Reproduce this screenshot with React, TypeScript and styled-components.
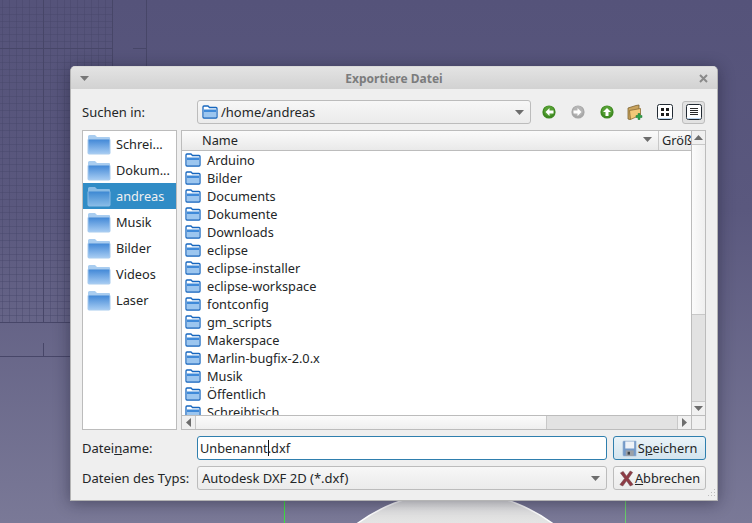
import React, { FC } from 'react';
import styled, { createGlobalStyle } from 'styled-components';

const GlobalStyle = createGlobalStyle`
  html, body {
    margin: 0;
    padding: 0;
    width: 752px;
    height: 523px;
    overflow: hidden;
    background: #55537a;
  }
  * { box-sizing: border-box; }
`;

const Desktop = styled.div`
  position: relative;
  width: 752px;
  height: 523px;
  overflow: hidden;
  background: linear-gradient(180deg, #55537a 0%, #5a587e 40%, #7a7997 100%);
  font-family: 'Noto Sans', 'Open Sans', sans-serif;
  font-size: 12px;
  color: #232627;
`;

const Backdrop = styled.svg`
  position: absolute;
  inset: 0;
`;

const Dialog = styled.div`
  position: absolute;
  left: 70px;
  top: 66px;
  width: 648px;
  height: 435px;
  display: flex;
  flex-direction: column;
  background: #efefef;
  border: 1px solid #b4b4b4;
  border-top-color: #d8d8d8;
  border-radius: 5px 5px 0 0;
  box-shadow: 0 2px 16px rgba(20, 20, 40, 0.45);
`;

const TitleBar = styled.div`
  height: 22px;
  flex: none;
  display: flex;
  align-items: center;
  justify-content: space-between;
  padding: 0 9px 0 9px;
  background: linear-gradient(180deg, #e3e3e3, #d2d2d2);
  border-radius: 4px 4px 0 0;
`;

const WindowTitle = styled.div`
  font-size: 12px;
  font-weight: 700;
  color: #7b7c7d;
`;

const Body = styled.div`
  flex: 1;
  display: flex;
  flex-direction: column;
  padding: 11px 11px 0 11px;
`;

const Row = styled.div`
  display: flex;
  align-items: center;
  height: 24px;
  flex: none;
`;

const FieldLabel = styled.div`
  width: 115px;
  flex: none;
  font-size: 13px;
  white-space: nowrap;
`;

const ComboBox = styled.div<{ $width: number }>`
  width: ${({ $width }) => $width}px;
  height: 24px;
  flex: none;
  display: flex;
  align-items: center;
  justify-content: space-between;
  gap: 4px;
  padding: 0 6px 0 4px;
  border: 1px solid #bcbcbc;
  border-radius: 3px;
  background: linear-gradient(180deg, #f7f7f7, #ebebeb);
  font-size: 13px;
`;

const ComboValue = styled.div`
  flex: 1;
  display: flex;
  align-items: center;
  gap: 3px;
`;

const Toolbar = styled.div`
  display: flex;
  align-items: center;
  margin-left: 6px;
`;

const ToolButton = styled.div<{ $checked?: boolean }>`
  width: 23px;
  height: 23px;
  margin-right: 6px;
  display: flex;
  align-items: center;
  justify-content: center;
  border-radius: 3px;
  border: 1px solid ${({ $checked }) => ($checked ? '#bdbdbd' : 'transparent')};
  background: ${({ $checked }) => ($checked ? '#e2e2e2' : 'transparent')};
`;

const Panes = styled.div`
  height: 300px;
  flex: none;
  display: flex;
  gap: 4px;
  margin-top: 6px;
  margin-bottom: 6px;
`;

const Sidebar = styled.div`
  width: 95px;
  flex: none;
  border: 1px solid #bcbcbc;
  background: #fff;
  padding-top: 0;
`;

const Place = styled.div<{ $selected?: boolean }>`
  height: 26px;
  display: flex;
  align-items: center;
  gap: 5px;
  padding-left: 4px;
  font-size: 12.75px;
  background: ${({ $selected }) => ($selected ? '#308cc6' : 'transparent')};
  color: ${({ $selected }) => ($selected ? '#eff0f1' : '#232627')};
`;

const ListFrame = styled.div`
  width: 525px;
  flex: none;
  display: grid;
  grid-template-columns: 509px 14px;
  grid-template-rows: 284px 14px;
  border: 1px solid #bcbcbc;
  background: #fff;
`;

const Table = styled.div`
  display: flex;
  flex-direction: column;
  overflow: hidden;
`;

const HeaderRow = styled.div`
  height: 20px;
  flex: none;
  display: flex;
  background: linear-gradient(180deg, #fbfbfb, #e9e9e9);
  border-bottom: 1px solid #bcbcbc;
`;

const NameHeader = styled.div`
  width: 477px;
  flex: none;
  display: flex;
  align-items: center;
  justify-content: space-between;
  padding: 0 6px 2px 20px;
  border-right: 1px solid #c8c8c8;
  font-size: 12.75px;
`;

const SizeHeader = styled.div`
  flex: 1;
  overflow: hidden;
  padding-left: 3px;
  line-height: 18px;
  font-size: 12.75px;
  white-space: nowrap;
`;

const Files = styled.div`
  flex: 1;
  overflow: hidden;
`;

const FileRow = styled.div`
  height: 18px;
  display: flex;
  align-items: center;
  gap: 6px;
  padding-left: 3px;
  font-size: 12.75px;
`;

const VScroll = styled.div`
  grid-row: 1;
  grid-column: 2;
  display: flex;
  flex-direction: column;
  border-left: 1px solid #bcbcbc;
`;

const HScroll = styled.div`
  grid-row: 2;
  grid-column: 1;
  display: flex;
  border-top: 1px solid #bcbcbc;
`;

const Corner = styled.div`
  grid-row: 2;
  grid-column: 2;
  background: #efefef;
  border-top: 1px solid #bcbcbc;
  border-left: 1px solid #bcbcbc;
`;

const ArrowButton = styled.div<{ $horizontal?: boolean }>`
  flex: none;
  ${({ $horizontal }) => ($horizontal ? 'width: 14px;' : 'height: 14px;')}
  display: flex;
  align-items: center;
  justify-content: center;
  background: #f0f0f0;
  ${({ $horizontal }) =>
    $horizontal ? 'border-right: 1px solid #c8c8c8;' : 'border-bottom: 1px solid #c8c8c8;'}
`;

const EndButton = styled(ArrowButton)`
  ${({ $horizontal }) =>
    $horizontal
      ? 'border-right: 0; border-left: 1px solid #c8c8c8;'
      : 'border-bottom: 0; border-top: 1px solid #c8c8c8;'}
`;

const Handle = styled.div<{ $horizontal?: boolean }>`
  flex: 1;
  background: linear-gradient(
    ${({ $horizontal }) => ($horizontal ? '180deg' : '90deg')},
    #fbfbfb,
    #efefef
  );
`;

const Track = styled.div<{ $horizontal?: boolean; $size: number }>`
  flex: none;
  ${({ $horizontal, $size }) => ($horizontal ? `width: ${$size}px;` : `height: ${$size}px;`)}
  background: #e2e2e2;
  ${({ $horizontal }) =>
    $horizontal ? 'border-left: 1px solid #c8c8c8;' : 'border-top: 1px solid #c8c8c8;'}
`;

const TextField = styled.div`
  width: 410px;
  height: 24px;
  flex: none;
  display: flex;
  align-items: center;
  padding-left: 2px;
  border: 1px solid #2f7fae;
  border-radius: 3px;
  background: #fff;
  font-size: 12.75px;
`;

const Caret = styled.span`
  display: inline-block;
  width: 1px;
  height: 16px;
  margin-right: -1px;
  background: #111;
`;

const ActionButton = styled.div<{ $focused?: boolean }>`
  width: 93px;
  height: 24px;
  flex: none;
  margin-left: 6px;
  display: flex;
  align-items: center;
  justify-content: center;
  gap: 1px;
  border: 1px solid ${({ $focused }) => ($focused ? '#2f7fae' : '#bcbcbc')};
  border-radius: 3px;
  background: ${({ $focused }) =>
    $focused ? 'linear-gradient(180deg, #eaf3f8, #d3e4ee)' : 'linear-gradient(180deg, #f7f7f7, #ebebeb)'};
  font-size: 12.75px;
`;

const RowGap = styled.div`
  height: 6px;
  flex: none;
`;

const SizeGrip = styled.svg`
  position: absolute;
  right: 1px;
  bottom: 1px;
`;

const FolderIcon: FC<{ size?: number; faded?: boolean }> = ({ size = 16, faded }) =>
  size > 16 ? (
    <svg width="24" height="22" viewBox="0 0 24 22" style={{ flex: 'none', opacity: faded ? 0.75 : 1 }}>
      <path d="M1 3.5 Q1 2 2.5 2 H8 L10 4 H22 Q23 4 23 5 V20 Q23 21 22 21 H2 Q1 21 1 20 Z" fill="#a9cdf0" />
      <rect x="1" y="6" width="22" height="15" rx="1" fill="url(#bigFolder)" stroke="#a8cbee" strokeWidth="1" />
      <defs>
        <linearGradient id="bigFolder" x1="0" y1="0" x2="0" y2="1">
          <stop offset="0" stopColor="#3f86d6" />
          <stop offset="1" stopColor="#a8cdf3" />
        </linearGradient>
      </defs>
    </svg>
  ) : (
    <svg width="16" height="14" viewBox="0 0 16 14" style={{ flex: 'none' }}>
      <path d="M1 2 Q1 1 2 1 H6 L7.5 2.5 H14 Q15 2.5 15 3.5 V12 Q15 13 14 13 H2 Q1 13 1 12 Z" fill="#fff" stroke="#1767bf" strokeWidth="1.3" />
      <rect x="2" y="4.5" width="12" height="3" fill="#3f8ad9" />
      <rect x="2" y="7.5" width="12" height="4.6" fill="#9cc6ef" />
    </svg>
  );

const Triangle: FC<{ dir: 'up' | 'down' | 'left' | 'right'; color?: string; size?: number }> = ({
  dir,
  color = '#6d6d6d',
  size = 9,
}) => {
  const points = {
    up: '0,5 9,5 4.5,0',
    down: '0,0 9,0 4.5,5',
    left: '5,0 5,9 0,4.5',
    right: '0,0 0,9 5,4.5',
  }[dir];
  const vertical = dir === 'up' || dir === 'down';
  return (
    <svg
      width={vertical ? size : (size * 5) / 9}
      height={vertical ? (size * 5) / 9 : size}
      viewBox={vertical ? '0 0 9 5' : '0 0 5 9'}
      style={{ flex: 'none' }}
    >
      <polygon points={points} fill={color} />
    </svg>
  );
};

const NavIcon: FC<{ dir: 'left' | 'right' | 'up'; disabled?: boolean }> = ({ dir, disabled }) => {
  const arrow = {
    left: 'M3.5 7 L7.5 3 V5.5 H11.5 V8.5 H7.5 V11 Z',
    right: 'M10.5 7 L6.5 3 V5.5 H2.5 V8.5 H6.5 V11 Z',
    up: 'M7 3 L11 7 H8.5 V11 H5.5 V7 H3 Z',
  }[dir];
  return (
    <svg width="14" height="14" viewBox="0 0 14 14">
      <circle cx="7" cy="7" r="6.6" fill={disabled ? '#a8a8a8' : '#3f8a22'} />
      <circle cx="7" cy="6" r="5" fill={disabled ? '#bababa' : '#5fa83c'} opacity="0.7" />
      <path d={arrow} fill="#fff" />
    </svg>
  );
};

const NewFolderIcon: FC = () => (
  <svg width="17" height="17" viewBox="0 0 17 17">
    <path d="M1 4 L9 1.5 L12 1 V9 L3 15.5 L1 15 Z" fill="#c9a35e" stroke="#7c6230" strokeWidth="0.8" />
    <path d="M2.5 6.5 L13.5 4.5 V11 L3.5 15.5 Z" fill="#f3c878" stroke="#8a6c34" strokeWidth="0.8" />
    <path d="M11 9.5 H13 V11.5 H15 V13.5 H13 V15.5 H11 V13.5 H9 V11.5 H11 Z" fill="#2fa24a" stroke="#1d7a33" strokeWidth="0.5" />
  </svg>
);

const IconModeIcon: FC = () => (
  <svg width="16" height="16" viewBox="0 0 16 16">
    <rect x="0.5" y="0.5" width="15" height="15" rx="2" fill="#fff" stroke="#222a33" />
    <path d="M1.5 14.5 H14.5" stroke="#bcd6ee" />
    <rect x="4" y="4" width="3" height="3" fill="#1c1c1c" />
    <rect x="9" y="4" width="3" height="3" fill="#1c1c1c" />
    <rect x="4" y="9" width="3" height="3" fill="#1c1c1c" />
    <rect x="9" y="9" width="3" height="3" fill="#1c1c1c" />
  </svg>
);

const DetailModeIcon: FC = () => (
  <svg width="16" height="16" viewBox="0 0 16 16">
    <rect x="0.5" y="0.5" width="15" height="15" rx="2" fill="#fff" stroke="#222a33" />
    <path d="M1.5 14.5 H14.5" stroke="#bcd6ee" />
    <path d="M4 4.5 H12 M4 6.5 H12 M4 8.5 H12 M4 10.5 H12" stroke="#2a2a2a" strokeWidth="1" />
  </svg>
);

const SaveIcon: FC = () => (
  <svg width="15" height="17" viewBox="0 0 16 18" style={{ flex: 'none' }}>
    <path d="M1 2 Q1 1 2 1 H15 V17 H2 Q1 17 1 16 Z" fill="#7399c8" stroke="#9db6d4" strokeWidth="0.6" />
    <rect x="3.5" y="1.5" width="9.5" height="7.5" fill="#eef2f7" />
    <rect x="4" y="11" width="8.5" height="6" fill="#9aa0a7" />
    <rect x="6" y="12.5" width="2.5" height="3" fill="#3b4147" />
  </svg>
);

const CancelIcon: FC = () => (
  <svg width="15" height="17" viewBox="0 0 16 18" style={{ flex: 'none' }}>
    <path
      d="M1.5 3 L4.5 1.5 L8 6.5 L12 1 L14.5 2.5 L10 9 L15 15.5 L12 17 L8 11.5 L4 17 L1 15.5 L6 9 Z"
      fill="#8f3b45"
      stroke="#6b4248"
      strokeWidth="0.6"
    />
  </svg>
);

const places = [
  { name: 'Schrei...' },
  { name: 'Dokum...' },
  { name: 'andreas', selected: true },
  { name: 'Musik' },
  { name: 'Bilder' },
  { name: 'Videos' },
  { name: 'Laser' },
];

const files = [
  'Arduino',
  'Bilder',
  'Documents',
  'Dokumente',
  'Downloads',
  'eclipse',
  'eclipse-installer',
  'eclipse-workspace',
  'fontconfig',
  'gm_scripts',
  'Makerspace',
  'Marlin-bugfix-2.0.x',
  'Musik',
  'Öffentlich',
  'Schreibtisch',
];

const gridLine = '#474668';
const snap = (v: number) => Math.floor(v) + 0.5;

const DesktopDrawing: FC = () => {
  const minorX = Array.from({ length: 16 }, (_, i) => snap(2.4 + i * 6.85));
  const minorY = Array.from({ length: 46 }, (_, i) => snap(7.4 + i * 6.85));
  return (
    <Backdrop width="752" height="523" viewBox="0 0 752 523">
      <defs>
        <linearGradient id="disc" x1="0" y1="0" x2="0" y2="1">
          <stop offset="0" stopColor="#e6e6e6" />
          <stop offset="1" stopColor="#c8c8c8" />
        </linearGradient>
      </defs>
      {minorX.map(x => (
        <line key={x} x1={x} y1="0" x2={x} y2="322" stroke={gridLine} strokeOpacity="0.4" />
      ))}
      {minorY.map(y => (
        <line key={y} x1="0" y1={y} x2="112" y2={y} stroke={gridLine} strokeOpacity="0.4" />
      ))}
      <path
        d="M43.5 0 V322 M112.5 0 V66 M146.5 0 V66 M0 48.5 H112 M133 48.5 H146 M0 322.5 H70 M0 356.5 H70 M43.5 343 V356"
        stroke={gridLine}
        strokeWidth="1"
      />
      <circle cx="455" cy="657" r="165.4" fill="url(#disc)" stroke="#ffffff" strokeWidth="1.5" />
      <path d="M284.5 501 V523" stroke="#3fe03f" strokeWidth="1" />
      <path d="M625.5 501 V523" stroke="#6ad06a" strokeWidth="1" />
    </Backdrop>
  );
};

export default function App() {
  return (
    <Desktop>
      <GlobalStyle />
      <DesktopDrawing />
      <Dialog>
        <TitleBar>
          <Triangle dir="down" color="#777" />
          <WindowTitle>Exportiere Datei</WindowTitle>
          <svg width="9" height="9" viewBox="0 0 9 9">
            <path d="M1 1 L8 8 M8 1 L1 8" stroke="#8a8a8a" strokeWidth="2" />
          </svg>
        </TitleBar>
        <Body>
          <Row>
            <FieldLabel>Suchen in:</FieldLabel>
            <ComboBox $width={334}>
              <ComboValue>
                <FolderIcon />
                /home/andreas
              </ComboValue>
              <Triangle dir="down" />
            </ComboBox>
            <Toolbar>
              <ToolButton>
                <NavIcon dir="left" />
              </ToolButton>
              <ToolButton>
                <NavIcon dir="right" disabled />
              </ToolButton>
              <ToolButton>
                <NavIcon dir="up" />
              </ToolButton>
              <ToolButton>
                <NewFolderIcon />
              </ToolButton>
              <ToolButton>
                <IconModeIcon />
              </ToolButton>
              <ToolButton $checked>
                <DetailModeIcon />
              </ToolButton>
            </Toolbar>
          </Row>
          <Panes>
            <Sidebar>
              {places.map(place => (
                <Place key={place.name} $selected={place.selected}>
                  <FolderIcon size={24} faded={place.selected} />
                  {place.name}
                </Place>
              ))}
            </Sidebar>
            <ListFrame>
              <Table>
                <HeaderRow>
                  <NameHeader>
                    Name
                    <Triangle dir="down" />
                  </NameHeader>
                  <SizeHeader>Größe</SizeHeader>
                </HeaderRow>
                <Files>
                  {files.map(file => (
                    <FileRow key={file}>
                      <FolderIcon />
                      {file}
                    </FileRow>
                  ))}
                </Files>
              </Table>
              <VScroll>
                <ArrowButton>
                  <Triangle dir="up" />
                </ArrowButton>
                <Handle />
                <Track $size={87} />
                <EndButton>
                  <Triangle dir="down" />
                </EndButton>
              </VScroll>
              <HScroll>
                <ArrowButton $horizontal>
                  <Triangle dir="left" />
                </ArrowButton>
                <Handle $horizontal />
                <Track $horizontal $size={131} />
                <EndButton $horizontal>
                  <Triangle dir="right" />
                </EndButton>
              </HScroll>
              <Corner />
            </ListFrame>
          </Panes>
          <Row>
            <FieldLabel>
              Datei<u>n</u>ame:
            </FieldLabel>
            <TextField>
              Unbenannt
              <Caret />
              .dxf
            </TextField>
            <ActionButton $focused>
              <SaveIcon />
              <span>
                S<u>p</u>eichern
              </span>
            </ActionButton>
          </Row>
          <RowGap />
          <Row>
            <FieldLabel>Dateien des Typs:</FieldLabel>
            <ComboBox $width={410}>
              <ComboValue>Autodesk DXF 2D (*.dxf)</ComboValue>
              <Triangle dir="down" />
            </ComboBox>
            <ActionButton>
              <CancelIcon />
              <span>
                <u>A</u>bbrechen
              </span>
            </ActionButton>
          </Row>
        </Body>
        <SizeGrip width="12" height="12" viewBox="0 0 12 12">
          <path d="M10 2h1v1h-1z M7 5h1v1H7z M10 5h1v1h-1z M4 8h1v1H4z M7 8h1v1H7z M10 8h1v1h-1z" fill="#bdbdbd" />
        </SizeGrip>
      </Dialog>
    </Desktop>
  );
}
